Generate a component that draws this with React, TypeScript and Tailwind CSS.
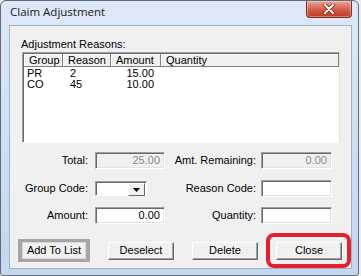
import React from "react";

// Win7 basic dialog: "Claim Adjustment"

const UI_FONT = { fontFamily: '"Liberation Sans", Arial, sans-serif' };
const TITLE_FONT = { fontFamily: '"Open Sans", "Noto Sans", sans-serif' };

type Row = { group: string; reason: string; amount: string; qty: string };

const ROWS: Row[] = [
  { group: "PR", reason: "2", amount: "15.00", qty: "" },
  { group: "CO", reason: "45", amount: "10.00", qty: "" },
];

function TextBox({ w, value, disabled }: { w: string; value?: string; disabled?: boolean }) {
  return (
    <div
      className={`${w} h-[17px] flex items-center justify-end pr-[4px] border border-t-[#a0a0a0] border-l-[#a0a0a0] border-b-white border-r-white shadow-[inset_1px_1px_0_#696969,inset_-1px_-1px_0_#e3e3e3] ${
        disabled ? "bg-[#f0f0f0] text-[#8a8a8a]" : "bg-white text-black"
      }`}
    >
      {value}
    </div>
  );
}

function Button({ label }: { label: string }) {
  return (
    <div className="w-[66px] h-[18px] flex items-center justify-center bg-[#f0f0f0] border border-t-white border-l-white border-b-[#696969] border-r-[#696969] shadow-[inset_-1px_-1px_0_#a0a0a0] text-black">
      {label}
    </div>
  );
}

function HeaderCell({ w, label }: { w: string; label: string }) {
  return (
    <div className={`${w} h-full flex items-center pl-[5px] border-r border-b border-r-[#808080] border-b-[#808080] shadow-[inset_1px_1px_0_#ffffff]`}>
      {label}
    </div>
  );
}

function Combo() {
  return (
    <div className="w-[52px] h-[15px] flex justify-end bg-white border border-t-[#a0a0a0] border-l-[#a0a0a0] border-b-white border-r-white shadow-[inset_1px_1px_0_#696969]">
      <div className="w-[17px] h-full flex items-center justify-center bg-[#f0f0f0] border border-t-white border-l-white border-b-[#696969] border-r-[#696969] mt-[1px] mr-[1px] mb-[1px]">
        <svg width="7" height="4" viewBox="0 0 7 4">
          <path d="M0 0 H7 L3.5 4 Z" fill="#000" />
        </svg>
      </div>
    </div>
  );
}

export default function App() {
  return (
    <div className="relative w-[361px] h-[276px] bg-[#ececec] overflow-hidden text-[11px] leading-none" style={UI_FONT}>
      {/* window frame */}
      <div className="w-[359px] h-[276px] flex flex-col border border-[#5d6b7c] rounded-t-[6px] rounded-b-[3px] bg-gradient-to-b from-[#dde9f7] via-[#cfdff2] to-[#c4d7ee] pl-[8px] pr-[6px] pb-[6px]">
        {/* title bar */}
        <div className="h-[24px] flex items-start justify-between">
          <span className="mt-[5px] ml-[1px] text-[11.5px] text-[#1b1b1b]" style={TITLE_FONT}>
            Claim Adjustment
          </span>
          <div className="w-[46px] h-[17px] flex items-center justify-center rounded-b-[4px] border border-t-0 border-[#8a2a1e] bg-gradient-to-b from-[#e7a597] via-[#d4604c] to-[#c0381f] shadow-[inset_0_0_0_1px_rgba(255,255,255,0.35)]">
            <svg width="12" height="10" viewBox="0 0 12 10">
              <path d="M2 1 L10 9 M10 1 L2 9" stroke="#6b1d12" strokeWidth="3.4" strokeLinecap="round" />
              <path d="M2 1 L10 9 M10 1 L2 9" stroke="#ffffff" strokeWidth="2" strokeLinecap="round" />
            </svg>
          </div>
        </div>

        {/* client area */}
        <div className="flex-1 flex flex-col bg-[#f0f0f0] border border-[#9fb2c9]">
          <div className="mt-[12px] ml-[11px] h-[13px] flex items-center text-black">Adjustment Reasons:</div>

          {/* list view */}
          <div className="mt-[1px] ml-[12px] w-[318px] h-[91px] flex flex-col bg-white border border-t-[#a0a0a0] border-l-[#a0a0a0] border-b-white border-r-[#e3e3e3] shadow-[inset_1px_1px_0_#696969]">
            <div className="h-[13px] ml-[1px] mt-[1px] flex bg-[#f0f0f0] text-black">
              <HeaderCell w="w-[39px]" label="Group" />
              <HeaderCell w="w-[48px]" label="Reason" />
              <HeaderCell w="w-[50px]" label="Amount" />
              <HeaderCell w="w-[178px]" label="Quantity" />
            </div>
            <div className="mt-[1px] flex flex-col text-black">
              {ROWS.map((r) => (
                <div key={r.group} className="h-[11px] flex items-center">
                  <div className="w-[40px] pl-[4px]">{r.group}</div>
                  <div className="w-[48px] pl-[7px]">{r.reason}</div>
                  <div className="w-[43px] text-right">{r.amount}</div>
                  <div className="flex-1 pl-[12px]">{r.qty}</div>
                </div>
              ))}
            </div>
          </div>

          {/* form rows */}
          <div className="mt-[9px] flex items-center">
            <div className="w-[78px] text-right text-black">Total:</div>
            <div className="ml-[7px]">
              <TextBox w="w-[70px]" value="25.00" disabled />
            </div>
            <div className="w-[91px] text-right text-black">Amt. Remaining:</div>
            <div className="ml-[5px]">
              <TextBox w="w-[71px]" value="0.00" disabled />
            </div>
          </div>

          <div className="mt-[11px] h-[17px] flex items-center">
            <div className="w-[78px] text-right text-black">Group Code:</div>
            <div className="ml-[7px] w-[70px]">
              <Combo />
            </div>
            <div className="w-[91px] text-right text-black">Reason Code:</div>
            <div className="ml-[5px]">
              <TextBox w="w-[71px]" />
            </div>
          </div>

          <div className="mt-[10px] flex items-center">
            <div className="w-[78px] text-right text-black">Amount:</div>
            <div className="ml-[7px]">
              <TextBox w="w-[70px]" value="0.00" />
            </div>
            <div className="w-[91px] text-right text-black">Quantity:</div>
            <div className="ml-[5px]">
              <TextBox w="w-[71px]" />
            </div>
          </div>

          {/* buttons */}
          <div className="mt-[15px] ml-[8px] h-[23px] flex items-center">
            <div className="w-[72px] h-[23px] flex items-center justify-center bg-[#a6a6a6]">
              <div className="w-[64px] h-[17px] flex items-center justify-center bg-[#f0f0f0] border border-[#d8d8d8] text-black">
                Add To List
              </div>
            </div>
            <div className="ml-[18px]">
              <Button label="Deselect" />
            </div>
            <div className="ml-[18px]">
              <Button label="Delete" />
            </div>
            <div className="ml-[18px]">
              <Button label="Close" />
            </div>
          </div>
        </div>
      </div>

      {/* red highlight annotation over Close */}
      <div className="absolute left-[266px] top-[233px] w-[85px] h-[35px] border-[4px] border-[#e3202b] rounded-[8px]" />
    </div>
  );
}
